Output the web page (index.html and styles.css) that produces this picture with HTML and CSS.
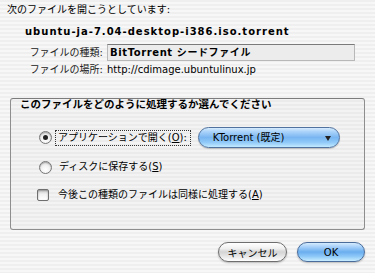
FILE: index.html
```html
<!DOCTYPE html>
<html lang="ja">

<head>
    <meta charset="UTF-8">
    <meta name="viewport" content="width=device-width, initial-scale=1.0">
    <title>ファイルを開く</title>
    <link rel="stylesheet" href="styles.css">
</head>

<body>
    <div class="dialog">
        <!-- Header -->
        <p class="intro">次のファイルを開こうとしています:</p>
        <p class="filename">ubuntu-ja-7.04-desktop-i386.iso.torrent</p>

        <div class="info">
            <span class="info-label">ファイルの種類:</span>
            <span class="info-field">BitTorrent シードファイル</span>
            <span class="info-label">ファイルの場所:</span>
            <span class="info-value">http://cdimage.ubuntulinux.jp</span>
        </div>

        <!-- Action group -->
        <div class="group">
            <h2 class="group-title">このファイルをどのように処理するか選んでください</h2>

            <div class="option option-open">
                <span class="radio checked"></span>
                <span class="option-label focused">アプリケーションで開く(<u>O</u>):</span>
                <div class="popup">
                    <span>KTorrent (既定)</span>
                    <span class="popup-arrow"></span>
                </div>
            </div>

            <div class="option option-save">
                <span class="radio"></span>
                <span class="option-label">ディスクに保存する(<u>S</u>)</span>
            </div>

            <div class="option option-remember">
                <span class="checkbox"></span>
                <span class="option-label">今後この種類のファイルは同様に処理する(<u>A</u>)</span>
            </div>
        </div>

        <!-- Buttons -->
        <div class="buttons">
            <button type="button" class="btn btn-cancel">キャンセル</button>
            <button type="button" class="btn btn-ok">OK</button>
        </div>
    </div>
</body>

</html>
```

FILE: styles.css
```css
/* Global Styles */
* {
    margin: 0;
    padding: 0;
    box-sizing: border-box;
}

body {
    font-family: "DejaVu Sans", "Noto Sans CJK JP", sans-serif;
    font-size: 10px;
    color: #000;
    background-color: #f2f2f2;
}

.dialog {
    width: 375px;
    height: 273px;
    overflow: hidden;
    padding-top: 3px;
    background: repeating-linear-gradient(to bottom, #efefef 0, #efefef 2px, #f7f7f7 2px, #f7f7f7 4px);
}

/* Header */
.intro {
    line-height: 14px;
    padding-left: 7px;
}

.filename {
    margin-top: 8px;
    padding-left: 25px;
    line-height: 14px;
    font-weight: bold;
    letter-spacing: 1px;
}

.info {
    display: grid;
    grid-template-columns: 103px 248px;
    column-gap: 4px;
    row-gap: 2px;
    margin-top: 5px;
    align-items: center;
}

.info-label {
    text-align: right;
    line-height: 14px;
    color: #222;
}

.info-field {
    height: 17px;
    line-height: 15px;
    padding-left: 2px;
    font-weight: bold;
    letter-spacing: 0.6px;
    background-color: #ececec;
    border: 1px solid #b8b8b8;
    border-top-color: #7a7a7a;
}

.info-value {
    line-height: 14px;
}

/* Action group */
.group {
    margin: 21px 10px 0 10px;
    height: 132px;
    border: 1px solid #8e8e8e;
    border-top-color: #7c7c7c;
    border-radius: 3px;
    background-color: rgba(0, 0, 0, 0.015);
    padding-left: 28px;
}

.group-title {
    margin-left: -19px;
    font-size: 10.5px;
    line-height: 11px;
    font-weight: bold;
}

.option {
    display: flex;
    align-items: center;
}

.option-open {
    margin-top: 17px;
    height: 21px;
}

.option-save {
    margin-top: 11px;
    height: 16px;
}

.option-remember {
    margin-top: 12px;
    height: 16px;
}

.option-label {
    line-height: 14px;
    margin-left: 7px;
}

.option-label.focused {
    margin-left: 3px;
    padding: 0 3px 0 2px;
    border: 1px dotted #333;
}

.radio {
    width: 13px;
    height: 13px;
    border-radius: 50%;
    border: 1px solid #777;
    background: radial-gradient(circle at 50% 70%, #ffffff 0, #f4f4f4 40%, #cfcfcf 100%);
    box-shadow: inset 0 1px 1px rgba(0, 0, 0, 0.25);
    display: flex;
    align-items: center;
    justify-content: center;
}

.radio.checked::after {
    content: "";
    width: 5px;
    height: 5px;
    border-radius: 50%;
    background-color: #222;
}

.checkbox {
    width: 12px;
    height: 12px;
    margin-left: -2px;
    border: 1px solid #6f6f6f;
    border-radius: 2px;
    background: linear-gradient(to bottom, #cfcfcf 0, #f2f2f2 45%, #ffffff 100%);
    box-shadow: inset 0 1px 2px rgba(0, 0, 0, 0.3);
}

.option-remember .option-label {
    margin-left: 9px;
}

/* Popup button */
.popup {
    margin-left: 7px;
    width: 142px;
    height: 21px;
    border-radius: 11px;
    border: 1px solid #51729e;
    background: linear-gradient(to bottom, #d6ebfd 0, #a9d2fa 20%, #79b6f1 50%, #8fc9f8 75%, #c2eaff 100%);
    box-shadow: 0 1px 1px rgba(0, 0, 0, 0.2);
    display: flex;
    align-items: center;
    justify-content: space-between;
    padding: 0 8px 0 14px;
    line-height: 14px;
}

.popup-arrow {
    width: 0;
    height: 0;
    margin-top: 2px;
    border-left: 3px solid transparent;
    border-right: 3px solid transparent;
    border-top: 5px solid #222;
}

/* Buttons */
.buttons {
    display: flex;
    justify-content: flex-end;
    gap: 10px;
    margin-top: 12px;
    padding-right: 10px;
}

.btn {
    height: 20px;
    border-radius: 10px;
    font-family: "DejaVu Sans", "Noto Sans CJK JP", sans-serif;
    font-size: 10px;
    color: #000;
    box-shadow: 0 1px 2px rgba(0, 0, 0, 0.25);
}

.btn-cancel {
    width: 69px;
    border: 1px solid #6e6e6e;
    background: linear-gradient(to bottom, #ffffff 0, #f0f0f0 30%, #d4d4d4 50%, #ececec 80%, #ffffff 100%);
}

.btn-ok {
    width: 68px;
    border: 1px solid #4a6c9b;
    background: linear-gradient(to bottom, #d6ebfd 0, #a9d2fa 20%, #6aaeef 50%, #8fc9f8 75%, #c9edff 100%);
}
```
